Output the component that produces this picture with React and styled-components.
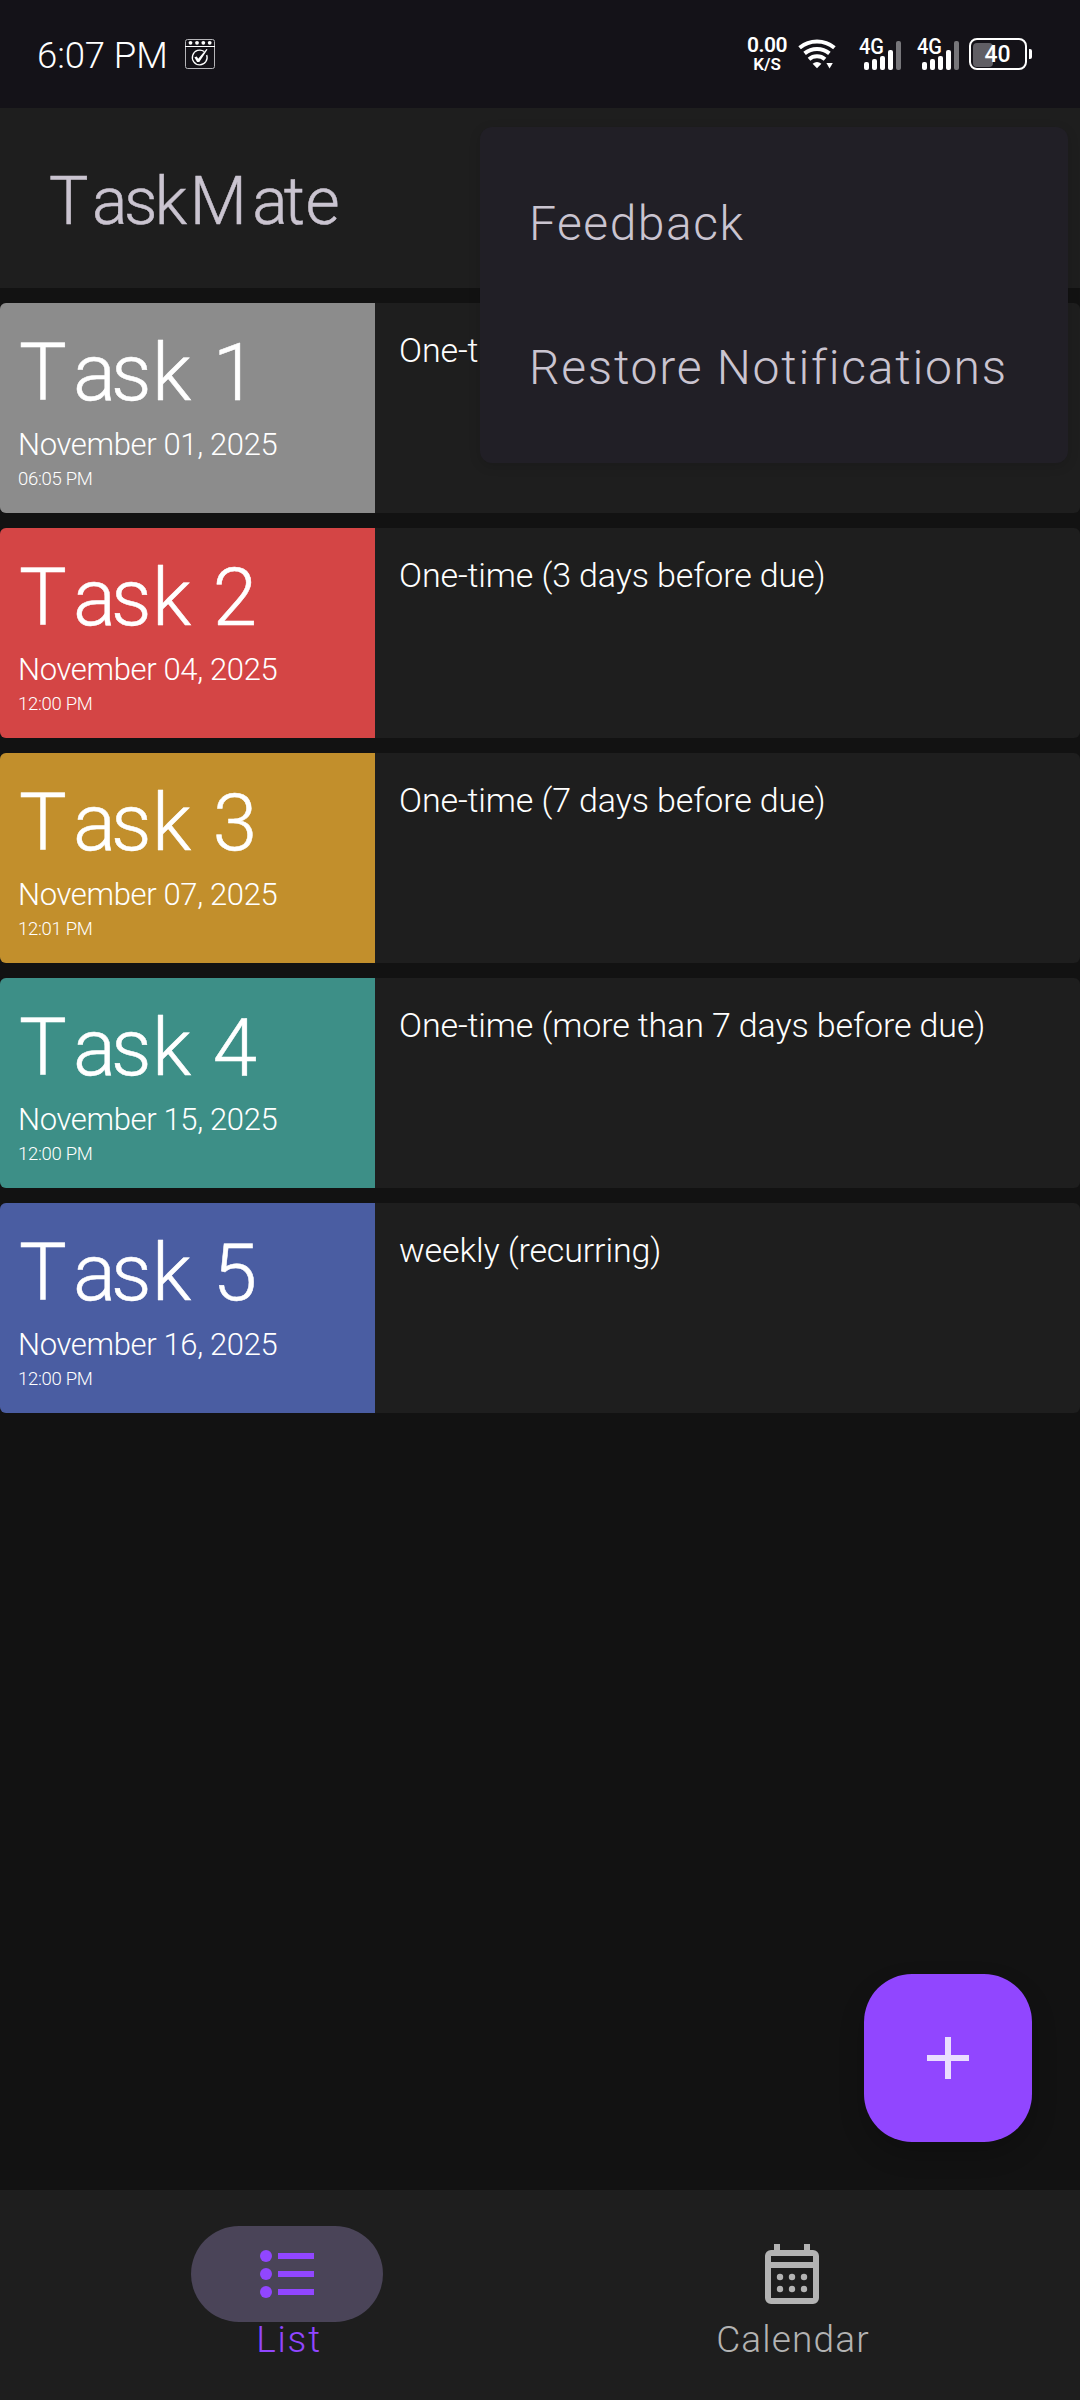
import React from "react";
import styled, { createGlobalStyle } from "styled-components";

const GlobalStyle = createGlobalStyle`
  * { box-sizing: border-box; }
  body {
    margin: 0;
    background: #121212;
    font-family: Roboto, "Liberation Sans", sans-serif;
    font-weight: 300;
  }
`;

const Screen = styled.div`
  position: relative;
  display: flex;
  flex-direction: column;
  width: 1080px;
  height: 2400px;
  background: #121212;
  overflow: hidden;
  white-space: pre;
`;

/* Status bar */

const StatusBar = styled.header`
  display: flex;
  align-items: center;
  justify-content: space-between;
  height: 108px;
  padding: 0 48px 0 37px;
  background: #141218;
  color: #fff;
`;

const StatusGroup = styled.div`
  display: flex;
  align-items: center;
`;

const Clock = styled.span`
  padding-top: 3px;
  margin-right: 17px;
  font-size: 36.5px;
  line-height: 44px;
  letter-spacing: -0.1px;
`;

const Speed = styled.div`
  display: flex;
  flex-direction: column;
  align-items: center;
  width: 42px;
  margin-right: 10px;
  font-weight: 600;
`;

const SpeedValue = styled.span`
  font-size: 21px;
  line-height: 19px;
  letter-spacing: -0.5px;
`;

const SpeedUnit = styled.span`
  font-size: 17px;
  line-height: 18px;
`;

const SignalIcon = styled.svg`
  width: 44px;
  height: 36px;
  margin-left: ${(p) => p.$gap}px;
  overflow: visible;
`;

const Battery = styled.div`
  display: flex;
  align-items: center;
  margin-left: 8px;
`;

const BatteryShell = styled.div`
  display: grid;
  align-items: center;
  width: 58px;
  height: 32px;
  padding: 2px;
  border: 2px solid #fff;
  border-radius: 8px;
`;

const BatteryFill = styled.div`
  grid-area: 1 / 1;
  width: 20px;
  height: 24px;
  border-radius: 4px;
  background: #605e64;
`;

const BatteryLevel = styled.span`
  grid-area: 1 / 1;
  padding: 1px 1px 0 0;
  text-align: center;
  font-size: 23px;
  font-weight: 500;
  line-height: 24px;
`;

const BatteryCap = styled.div`
  width: 3px;
  height: 10px;
  margin-left: 2px;
  border-radius: 0 2px 2px 0;
  background: #fff;
`;

/* App bar */

const AppBar = styled.div`
  display: flex;
  align-items: center;
  height: 180px;
  padding: 7px 0 0 49px;
  background: #1e1e1e;
`;

const AppTitle = styled.h1`
  margin: 0;
  font-size: 66px;
  line-height: 78px;
  font-weight: 300;
  color: #cac4d0;
  -webkit-text-stroke: 0.5px currentColor;
`;

const Letter = styled.span`
  letter-spacing: ${(p) => p.$gap}px;
`;

/* Task list */

const TaskList = styled.main`
  flex: 1;
  display: flex;
  flex-direction: column;
  gap: 15px;
  padding-top: 15px;
`;

const TaskCard = styled.article`
  display: flex;
  height: 210px;
  border-radius: 6px;
  background: #1e1e1e;
  color: #fff;
  overflow: hidden;
`;

const TaskSummary = styled.div`
  width: 375px;
  padding: 23px 0 0 18px;
  background: ${(p) => p.$color};
`;

const TaskName = styled.h2`
  margin: 0;
  padding-left: 1px;
  font-size: 80px;
  line-height: 94px;
  font-weight: 300;
  -webkit-text-stroke: 0.5px currentColor;
`;

const TaskDate = styled.div`
  margin-top: 7px;
  font-size: 31px;
  line-height: 36px;
  letter-spacing: -0.35px;
`;

const TaskTime = styled.div`
  margin-top: 5px;
  font-size: 18.5px;
  line-height: 22px;
  letter-spacing: -0.3px;
`;

const TaskNote = styled.p`
  margin: 0;
  padding: 27px 0 0 24px;
  font-size: 34px;
  line-height: 40px;
  letter-spacing: -0.13px;
`;

/* Overflow menu */

const Menu = styled.div`
  position: absolute;
  top: 127px;
  left: 480px;
  width: 588px;
  height: 336px;
  padding: 25px 48px 23px 49px;
  border-radius: 12px;
  background: #211f26;
  box-shadow: 0 3px 12px rgba(0, 0, 0, 0.14);
`;

const MenuItem = styled.div`
  font-size: 48px;
  line-height: 144px;
  letter-spacing: ${(p) => p.$spacing}px;
  color: #cac4d0;
`;

/* Floating button */

const Fab = styled.button`
  position: absolute;
  right: 48px;
  bottom: 258px;
  display: flex;
  align-items: center;
  justify-content: center;
  width: 168px;
  height: 168px;
  padding: 0;
  border: 0;
  border-radius: 48px;
  background: #9146ff;
  box-shadow: 0 12px 26px rgba(0, 0, 0, 0.2);
`;

/* Bottom navigation */

const BottomNav = styled.nav`
  display: flex;
  height: 210px;
  padding: 36px 36px 0 34px;
  background: #1e1e1e;
`;

const NavItem = styled.div`
  flex: 1;
  display: flex;
  flex-direction: column;
  align-items: center;
  color: ${(p) => (p.$active ? "#9146ff" : "#b3b3b3")};
`;

const NavPill = styled.div`
  display: flex;
  align-items: center;
  justify-content: center;
  width: 192px;
  height: 96px;
  border-radius: 48px;
  background: ${(p) => (p.$active ? "#4a4458" : "transparent")};
`;

const NavLabel = styled.span`
  margin-top: -4px;
  padding-left: ${(p) => p.$nudge}px;
  font-size: 37px;
  line-height: 44px;
  letter-spacing: ${(p) => p.$spacing}px;
`;

const TITLE_GAPS = [3.6, -3.5, -2.5, 2.4, 5.5, -4, 0.5, 0];
const NAME_GAPS = [6.2, -4.9, 0.5, 1, 1, 0];

const TASKS = [
  { name: "Task 1", date: "November 01, 2025", time: "06:05 PM", note: "One-time", color: "#8c8c8c" },
  { name: "Task 2", date: "November 04, 2025", time: "12:00 PM", note: "One-time (3 days before due)", color: "#d44545" },
  { name: "Task 3", date: "November 07, 2025", time: "12:01 PM", note: "One-time (7 days before due)", color: "#c28f2c" },
  { name: "Task 4", date: "November 15, 2025", time: "12:00 PM", note: "One-time (more than 7 days before due)", color: "#3d8f87" },
  { name: "Task 5", date: "November 16, 2025", time: "12:00 PM", note: "weekly (recurring)", color: "#4a5da2" },
];

function Spaced({ text, gaps }) {
  return [...text].map((ch, i) => (
    <Letter key={i} $gap={gaps[i]}>{ch}</Letter>
  ));
}

function TaskBadge() {
  return (
    <svg width="30" height="30" viewBox="0 0 30 30" fill="none">
      <rect x="0.5" y="0.5" width="29" height="29" rx="2" stroke="#b5b4b8" />
      <path d="M0 7.5H30" stroke="#fff" />
      <g fill="#fff">
        <circle cx="5.5" cy="3.8" r="1.9" />
        <circle cx="12" cy="3.8" r="1.9" />
        <circle cx="18.3" cy="3.8" r="1.9" />
        <circle cx="24.7" cy="3.8" r="1.9" />
      </g>
      <path d="M19.2 12.6A7.4 7.4 0 1 0 21.7 16" stroke="#fff" strokeWidth="1.3" />
      <path d="M9.4 18.3l2.4-.8 1.4 2.2 8.3-9.6 1 .3-8.2 12.6h-2.2z" fill="#fff" />
    </svg>
  );
}

function Wifi() {
  return (
    <svg width="38" height="32" viewBox="798 39 38 32" fill="none" stroke="#fff" strokeWidth="4">
      <path d="M799.6 48.8A27.4 27.4 0 0 1 834.4 48.8" />
      <path d="M804.6 54.4A19.5 19.5 0 0 1 829.4 54.4" />
      <path d="M809 60.2A12.3 12.3 0 0 1 825 60.2" />
      <path d="M812.6 64.8Q817 61 821.4 64.8L817 69.3Z" fill="#fff" stroke="none" />
      <path d="M826.4 64H832.8L829.6 69.4Z" fill="#fff" stroke="none" />
    </svg>
  );
}

function Signal({ gap }) {
  return (
    <SignalIcon viewBox="0 0 44 36" $gap={gap} fill="#fff">
      <text x="0" y="18" fontSize="22" fontWeight="500" textLength="25" lengthAdjust="spacingAndGlyphs">4G</text>
      <rect x="5" y="26" width="5" height="8" rx="2" />
      <rect x="13" y="23" width="5" height="11" rx="2" />
      <rect x="21" y="20" width="5" height="14" rx="2" />
      <rect x="29" y="14" width="5" height="20" rx="2" />
      <rect x="37" y="5" width="5" height="29" rx="2" fill="#77767a" />
    </SignalIcon>
  );
}

function PlusIcon() {
  return (
    <svg width="72" height="72" viewBox="0 0 24 24" fill="#eaddff">
      <path d="M19 13h-6v6h-2v-6H5v-2h6V5h2v6h6z" />
    </svg>
  );
}

function ListIcon() {
  return (
    <svg width="72" height="72" viewBox="0 0 72 72" fill="currentColor">
      {[18, 36, 54].map((y) => (
        <g key={y}>
          <circle cx="15" cy={y} r="6" />
          <rect x="27" y={y - 3} width="36" height="6" />
        </g>
      ))}
    </svg>
  );
}

function CalendarIcon() {
  return (
    <svg width="72" height="72" viewBox="0 0 72 72" fill="currentColor">
      <path
        fillRule="evenodd"
        d="M18 6h6v6h24V6h6v6h3a6 6 0 0 1 6 6v42a6 6 0 0 1-6 6H15a6 6 0 0 1-6-6V18a6 6 0 0 1 6-6h3zM15 18v6h42v-6zM15 30v30h42V30z"
      />
      {[39, 51].map((y) => [24, 36, 48].map((x) => <circle key={`${x}-${y}`} cx={x} cy={y} r="3.2" />))}
    </svg>
  );
}

export default function App() {
  return (
    <Screen>
      <GlobalStyle />
      <StatusBar>
        <StatusGroup>
          <Clock>6:07 PM</Clock>
          <TaskBadge />
        </StatusGroup>
        <StatusGroup>
          <Speed>
            <SpeedValue>0.00</SpeedValue>
            <SpeedUnit>K/S</SpeedUnit>
          </Speed>
          <Wifi />
          <Signal gap={23} />
          <Signal gap={14} />
          <Battery>
            <BatteryShell>
              <BatteryFill />
              <BatteryLevel>40</BatteryLevel>
            </BatteryShell>
            <BatteryCap />
          </Battery>
        </StatusGroup>
      </StatusBar>

      <AppBar>
        <AppTitle><Spaced text="TaskMate" gaps={TITLE_GAPS} /></AppTitle>
      </AppBar>

      <TaskList>
        {TASKS.map((task) => (
          <TaskCard key={task.name}>
            <TaskSummary $color={task.color}>
              <TaskName><Spaced text={task.name} gaps={NAME_GAPS} /></TaskName>
              <TaskDate>{task.date}</TaskDate>
              <TaskTime>{task.time}</TaskTime>
            </TaskSummary>
            <TaskNote>{task.note}</TaskNote>
          </TaskCard>
        ))}
      </TaskList>

      <BottomNav>
        <NavItem $active>
          <NavPill $active><ListIcon /></NavPill>
          <NavLabel $spacing={1.8} $nudge={5}>List</NavLabel>
        </NavItem>
        <NavItem>
          <NavPill><CalendarIcon /></NavPill>
          <NavLabel $spacing={1.15} $nudge={3}>Calendar</NavLabel>
        </NavItem>
      </BottomNav>

      <Fab aria-label="Add task"><PlusIcon /></Fab>

      <Menu>
        <MenuItem $spacing={1.5}>Feedback</MenuItem>
        <MenuItem $spacing={1.75}>Restore Notifications</MenuItem>
      </Menu>
    </Screen>
  );
}
